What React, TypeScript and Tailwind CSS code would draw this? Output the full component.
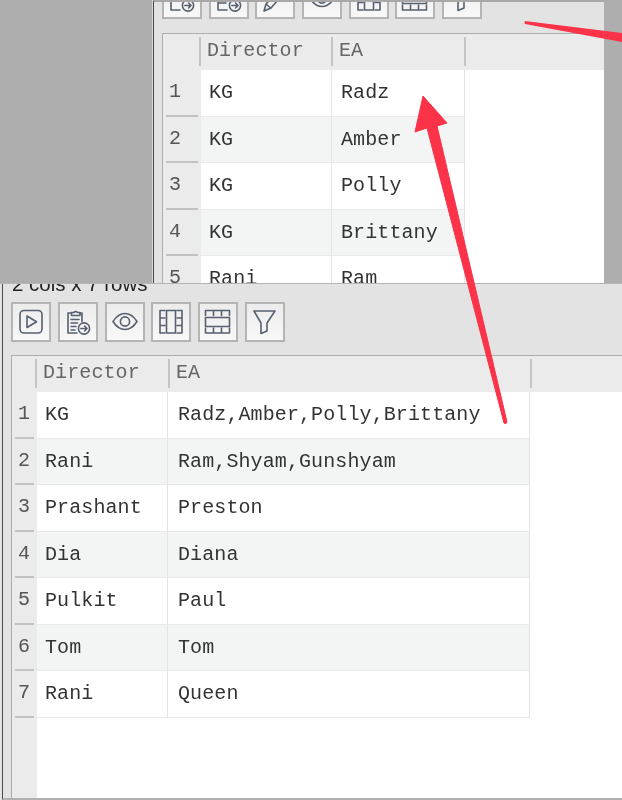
import React from 'react';

const mono = "font-['Liberation_Mono',monospace]";

// toolbar icons, all drawn on a 32px box
const stroke = {
  fill: 'none',
  stroke: '#566070',
  strokeWidth: 1.6,
  strokeLinecap: 'round' as const,
  strokeLinejoin: 'round' as const,
};

const Svg = ({ children }: { children: React.ReactNode }) => (
  <svg width="32" height="32" viewBox="0 0 32 32" {...stroke}>
    {children}
  </svg>
);

const arrowBadge = (
  <>
    <circle cx="22" cy="22.500" r="5.600" />
    <path d="M18.800 22.500h6M22.600 20l2.400 2.500-2.400 2.500" />
  </>
);

const PlayIcon = () => (
  <Svg>
    <rect x="5" y="4.500" width="22" height="22.500" rx="4" />
    <path d="M12 10v11.500l9.500-5.700z" />
  </Svg>
);
const ClipIcon = () => (
  <Svg>
    <path d="M15 27H6V7h3.500M18 7h2v8.500" />
    <path d="M9.500 9.500V6.500h2.500a2 2 0 0 1 3.500 0H18v3z" />
    <path d="M9 13.500h8M9 17h6.500M9 20.500h5M9 24h4" />
    {arrowBadge}
  </Svg>
);
const DocLIcon = () => (
  <Svg>
    <path d="M5 2v25h9" />
    {arrowBadge}
  </Svg>
);
const DocEIcon = () => (
  <Svg>
    <path d="M5 2v25h9M5 14h8M5 20h8" />
    {arrowBadge}
  </Svg>
);
const PencilIcon = () => (
  <Svg>
    <path d="M5 28l2-7L21 6l4 4-13 15z" />
    <path d="M7.500 21.500l4 3.500" />
  </Svg>
);
const EyeIcon = () => (
  <Svg>
    <path d="M4 15.500c3.500-5.500 7.500-8 12-8s8.500 2.500 12 8c-3.500 5.500-7.500 8-12 8s-8.500-2.500-12-8z" />
    <circle cx="16" cy="15.500" r="4.600" />
  </Svg>
);
const ColsIcon = () => (
  <Svg>
    <path d="M10 4.500H5v22.500h5M5 12h5M5 19.500h5" />
    <rect x="11.500" y="4.500" width="9" height="22.500" />
    <path d="M22 4.500h5v22.500h-5M27 12h-5M27 19.500h-5" />
  </Svg>
);
const RowsIcon = () => (
  <Svg>
    <path d="M3.500 9.500v-5h24v5M11.500 4.500v5M19.500 4.500v5" />
    <rect x="3.500" y="11.500" width="24" height="9" />
    <path d="M3.500 22v5h24v-5M11.500 22v5M19.500 22v5" />
  </Svg>
);
const FilterIcon = () => (
  <Svg>
    <path d="M5 5h21l-8 12v8l-6 2.500V17z" />
  </Svg>
);

const ToolButton = ({ children }: { children: React.ReactNode }) => (
  <div className="flex h-[40px] w-[40px] items-center justify-center border-2 border-[#b4b4b4] bg-gradient-to-b from-[#ececec] to-[#f8f8f8]">
    {children}
  </div>
);

type Row = [string, string];

const DataTable = ({
  rows,
  numWidth,
  col1,
  col2,
  col1Head,
  col2Head,
  cellPad,
}: {
  rows: Row[];
  numWidth: string;
  col1: string;
  col2: string;
  col1Head: string;
  col2Head: string;
  cellPad: string;
}) => (
  <div className={`${mono} min-h-0 flex-1 overflow-hidden border-t border-l border-[#acacac] bg-white text-[20px] tracking-[0.1px] text-[#333]`}>
    <div className="flex h-[36px] bg-[#ebebeb] text-[#666]">
      <div className={numWidth} />
      <div className={`${col1Head} mt-[3px] mb-[4px] ml-[-2px] flex items-center border-l-2 border-[#c4c4c4] pb-[2px] pl-[6px]`}>Director</div>
      <div className={`${col2Head} mt-[3px] mb-[4px] flex items-center border-l-2 border-[#c4c4c4] pb-[2px] pl-[6px]`}>EA</div>
      <div className="mt-[3px] mb-[4px] border-l-2 border-[#c4c4c4]" />
    </div>
    <div className="flex h-full">
      <div className={`${numWidth} h-full bg-[#ebebeb]`}>
        {rows.map((_, i) => (
          <div key={i} className="relative flex h-[46.500px] items-center pb-[2px] pl-[6px] text-[#555]">
            {i + 1}
            <div className="absolute right-[3px] bottom-0 left-[3px] h-[2px] bg-[#c2c2c2]" />
          </div>
        ))}
      </div>
      <div>
        {rows.map(([a, b], i) => (
          <div key={i} className={`flex h-[46.500px] border-b border-[#e9e9e9] ${i % 2 ? 'bg-[#f3f5f4]' : 'bg-white'}`}>
            <div className={`${col1} flex items-center border-r border-[#e4e4e4] pt-[1px] pl-[8px]`}>{a}</div>
            <div className={`${col2} flex items-center border-r border-[#e4e4e4] pt-[1px] ${cellPad}`}>{b}</div>
          </div>
        ))}
      </div>
    </div>
  </div>
);

const backRows: Row[] = [
  ['KG', 'Radz'],
  ['KG', 'Amber'],
  ['KG', 'Polly'],
  ['KG', 'Brittany'],
  ['Rani', 'Ram'],
];

const frontRows: Row[] = [
  ['KG', 'Radz,Amber,Polly,Brittany'],
  ['Rani', 'Ram,Shyam,Gunshyam'],
  ['Prashant', 'Preston'],
  ['Dia', 'Diana'],
  ['Pulkit', 'Paul'],
  ['Tom', 'Tom'],
  ['Rani', 'Queen'],
];

export default function App() {
  return (
    <div className="relative h-[800px] w-[622px] overflow-hidden bg-[#aeaeae] blur-[0.4px]">
      {/* window behind */}
      <div className="absolute top-0 left-[152px] h-[300px] w-[452px] bg-[#d8d8d8] pl-[1px]">
        <div className="flex h-full flex-col overflow-hidden border-t-2 border-l border-t-[#a8a8a8] border-l-[#4a4a4a] bg-[#e3e3e3] pl-[8px]">
          <div className="mt-[-23px] flex gap-[6.700px]">
            <ToolButton><DocLIcon /></ToolButton>
            <ToolButton><DocEIcon /></ToolButton>
            <ToolButton><PencilIcon /></ToolButton>
            <ToolButton><EyeIcon /></ToolButton>
            <ToolButton><ColsIcon /></ToolButton>
            <ToolButton><RowsIcon /></ToolButton>
            <ToolButton><FilterIcon /></ToolButton>
          </div>
          <div className="mt-[14px] flex min-h-0 flex-1">
            <DataTable
              rows={backRows}
              numWidth="w-[38px]"
              col1="w-[131px]"
              col2="w-[133px]"
              col1Head="w-[132px]"
              col2Head="w-[133px]"
              cellPad="pl-[9px]"
            />
          </div>
        </div>
      </div>

      {/* window in front */}
      <div className="absolute top-[283px] left-0 h-[517px] w-[622px] border-t border-t-[#b4b4b4] bg-[#e3e3e3] pl-[2px]">
        <div className="flex h-full flex-col overflow-hidden border-b-2 border-l border-b-[#b0b0b0] border-l-[#4a4a4a]">
          <div className="mt-[-11px] ml-[9px] h-[17px] font-['Liberation_Sans',sans-serif] text-[20.500px] leading-[22px] whitespace-nowrap text-[#222]">
            2 cols x 7 rows
          </div>
          <div className="mt-[12px] ml-[8px] flex gap-[6.800px]">
            <ToolButton><PlayIcon /></ToolButton>
            <ToolButton><ClipIcon /></ToolButton>
            <ToolButton><EyeIcon /></ToolButton>
            <ToolButton><ColsIcon /></ToolButton>
            <ToolButton><RowsIcon /></ToolButton>
            <ToolButton><FilterIcon /></ToolButton>
          </div>
          <div className="mt-[13px] ml-[8px] flex min-h-0 flex-1">
            <DataTable
              rows={frontRows}
              numWidth="w-[25px]"
              col1="w-[131px]"
              col2="w-[362px]"
              col1Head="w-[133px]"
              col2Head="w-[362px]"
              cellPad="pl-[10px]"
            />
          </div>
        </div>
      </div>

      {/* red annotation arrows */}
      <svg className="absolute top-0 left-0" width="622" height="800" viewBox="0 0 622 800">
        <path
          d="M423 96 L447 123 L437 126 L507 422 Q506 425 504 423 L427 128 L415 132 Z"
          fill="#fb3348"
          stroke="#fb3348"
          strokeWidth="1"
          strokeLinejoin="round"
        />
        <path d="M525 21 L622 33 L622 42 L525 24 Q524 22 525 21 Z" fill="#fb3348" />
      </svg>
    </div>
  );
}
